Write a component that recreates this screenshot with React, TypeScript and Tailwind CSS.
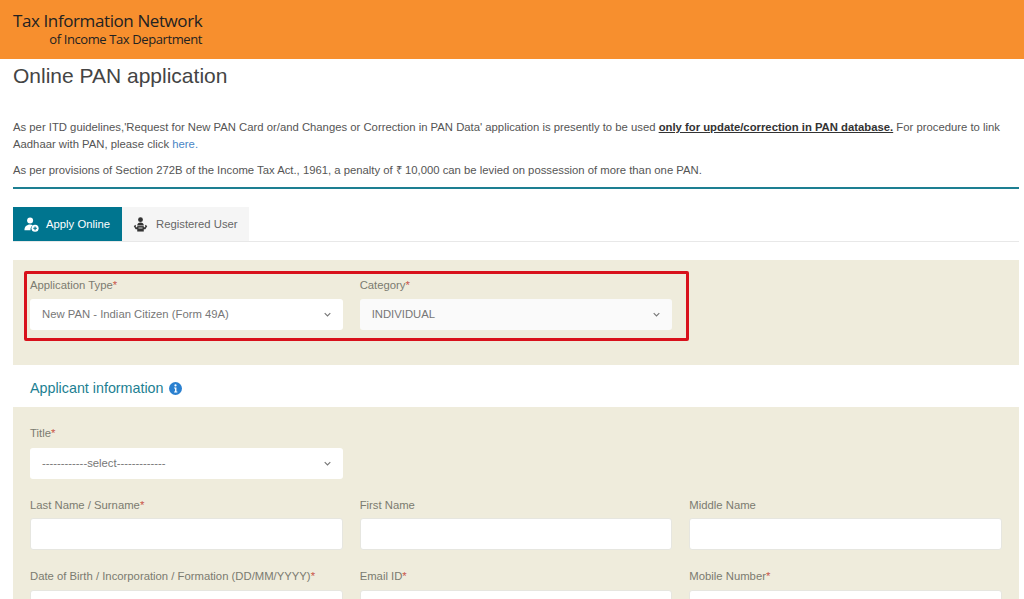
const Chevron = () => (
  <svg viewBox="0 0 10 6" className="w-[7px] h-[5px] text-[#777]" fill="none" stroke="currentColor" strokeWidth="1.600">
    <path d="M1 1l4 4 4-4" />
  </svg>
);

const Label = ({ text, required, gap = "mb-[7px]" }: { text: string; required?: boolean; gap?: string }) => (
  <div className={`text-[11.300px] leading-[14px] text-[#7b7b70] ${gap}`}>
    {text}
    {required && <span className="text-[#c9564a]">*</span>}
  </div>
);

const SelectBox = ({ value, muted }: { value: string; muted?: boolean }) => (
  <div className={`h-[31px] rounded-[3px] px-[12px] flex items-center justify-between text-[11.300px] text-[#777] ${muted ? "bg-[#fafafa]" : "bg-white"}`}>
    <span>{value}</span>
    <Chevron />
  </div>
);

const TextBox = () => <div className="h-[32px] rounded-[3px] bg-white border border-[#e6e6e0]" />;

const ApplyIcon = () => (
  <svg viewBox="0 0 16 16" className="w-[15px] h-[15px] text-white" fill="currentColor">
    <circle cx="6.500" cy="3.800" r="3.200" />
    <path d="M0.500 14c0-3.600 2.400-6 6-6 1.200 0 2.200.3 3 .8-1.600.9-2.600 2.600-2.600 4.400 0 .3 0 .5.1.8z" />
    <circle cx="11.800" cy="12" r="3.800" />
    <path d="M11.800 10v4M9.800 12h4" stroke="#00758f" strokeWidth="1.200" />
  </svg>
);

// person reading an open book
const UserIcon = () => (
  <svg viewBox="0 0 16 16" className="w-[15px] h-[15px] text-[#333]" fill="currentColor">
    <circle cx="8" cy="2.800" r="2.600" />
    <path d="M4.500 9c0-2 1.500-3.200 3.500-3.200s3.500 1.200 3.500 3.200z" />
    <path d="M0.800 9.500L3 8.200v2.800h10V8.200l2.200 1.300-2 3.500H2.800z" />
    <path d="M4.500 9.700h7v5.800h-7z" />
    <path d="M5.800 11.300h4.400v.9H5.800z" fill="#f5f5f5" />
  </svg>
);

const App = () => {
  return (
    <div className="h-[599px] overflow-hidden bg-white font-['Liberation_Sans',Arial,sans-serif]">
      <header className="h-[59px] bg-[#f78f2e] pl-[13px] pt-[11px] font-['Open_Sans',sans-serif] text-[#222]">
        <div className="w-[189px]">
          <div className="text-[17px] leading-[20px] whitespace-nowrap tracking-[-0.4px]">Tax Information Network</div>
          <div className="text-[13px] leading-[16px] text-right whitespace-nowrap tracking-[-0.4px]">of Income Tax Department</div>
        </div>
      </header>

      <main className="pl-[13px] pr-[5px]">
        <h1 className="text-[21px] leading-[24px] text-[#444] pt-[5px]">Online PAN application</h1>

        <div className="mt-[31px] text-[11.300px] leading-[17px] text-[#555] pb-[8px] border-b-2 border-[#1d7f92]">
          <p className="mb-[9px]">
            As per ITD guidelines,'Request for New PAN Card or/and Changes or Correction in PAN Data' application is presently to be used{" "}
            <span className="font-bold underline text-[#333]">only for update/correction in PAN database.</span> For procedure to link Aadhaar with PAN, please click{" "}
            <a className="text-[#4a86c5]">here.</a>
          </p>
          <p>
            As per provisions of Section 272B of the Income Tax Act., 1961, a penalty of ₹ 10,000 can be levied on possession of more than one PAN.
          </p>
        </div>

        <div className="mt-[18px] flex border-b border-[#e8e8e8] h-[35px] text-[11.300px]">
          <div className="w-[109px] bg-[#00758f] text-white flex items-center gap-[7px] pl-[11px]">
            <ApplyIcon />
            <span>Apply Online</span>
          </div>
          <div className="w-[127px] bg-[#f5f5f5] text-[#666] flex items-center gap-[8px] pl-[11px]">
            <UserIcon />
            <span>Registered User</span>
          </div>
        </div>

        <section className="relative mt-[18px] h-[105px] bg-[#efecdc] px-[17px] pt-[18px]">
          <div className="grid grid-cols-3 gap-x-[17px]">
            <div>
              <Label text="Application Type" required />
              <SelectBox value="New PAN - Indian Citizen (Form 49A)" />
            </div>
            <div>
              <Label text="Category" required />
              <SelectBox value="INDIVIDUAL" muted />
            </div>
          </div>
          <div className="absolute left-[11px] top-[11px] w-[665px] h-[70px] rounded-[2px] border-[3px] border-[#d8111b]" />
        </section>

        <h2 className="pl-[17px] pt-[5px] h-[42px] flex items-center gap-[5px] text-[14.300px] text-[#1d7f92]">
          Applicant information
          <svg viewBox="0 0 14 14" className="w-[13px] h-[13px]">
            <circle cx="7" cy="7" r="7" fill="#2a80d0" />
            <circle cx="7" cy="3.700" r="1.200" fill="#fff" />
            <path d="M5.500 6h2.500v4.200h1v1H5.500v-1h1V7h-1z" fill="#fff" />
          </svg>
        </h2>

        <section className="bg-[#efecdc] px-[17px] pt-[19px] pb-[20px]">
          <div className="grid grid-cols-3 gap-x-[17px]">
            <div>
              <Label text="Title" required gap="mb-[8px]" />
              <SelectBox value="------------select-------------" />
            </div>
          </div>
          <div className="grid grid-cols-3 gap-x-[17px] mt-[19px]">
            <div>
              <Label text="Last Name / Surname" required gap="mb-[6px]" />
              <TextBox />
            </div>
            <div>
              <Label text="First Name" gap="mb-[6px]" />
              <TextBox />
            </div>
            <div>
              <Label text="Middle Name" gap="mb-[6px]" />
              <TextBox />
            </div>
          </div>
          <div className="grid grid-cols-3 gap-x-[17px] mt-[19px]">
            <div>
              <Label text="Date of Birth / Incorporation / Formation (DD/MM/YYYY)" required />
              <TextBox />
            </div>
            <div>
              <Label text="Email ID" required />
              <TextBox />
            </div>
            <div>
              <Label text="Mobile Number" required />
              <TextBox />
            </div>
          </div>
        </section>
      </main>
    </div>
  );
};

export default App;
